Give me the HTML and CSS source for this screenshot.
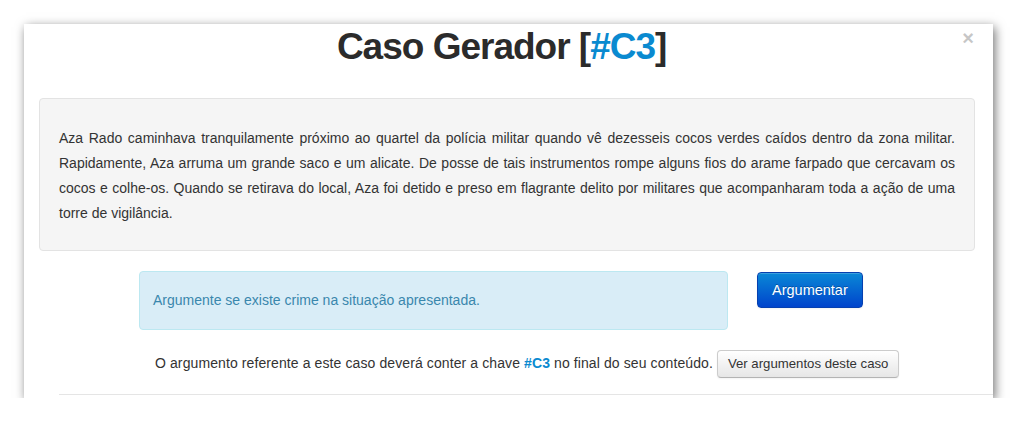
FILE: index.html
```html
<!DOCTYPE html>
<html lang="pt">
<head>
<meta charset="utf-8">
<title>Caso Gerador</title>
<link rel="stylesheet" href="styles.css">
</head>
<body>
<div class="modal">
  <div class="modal-header">
    <span class="close">×</span>
    <h3 class="title">Caso Gerador [<span class="tag">#C3</span>]</h3>
  </div>
  <div class="modal-body">
    <div class="well">
      <p class="case-text">Aza Rado caminhava tranquilamente próximo ao quartel da polícia militar quando vê dezesseis cocos verdes caídos dentro da zona militar. Rapidamente, Aza arruma um grande saco e um alicate. De posse de tais instrumentos rompe alguns fios do arame farpado que cercavam os cocos e colhe-os. Quando se retirava do local, Aza foi detido e preso em flagrante delito por militares que acompanharam toda a ação de uma torre de vigilância.</p>
    </div>
    <div class="action-row">
      <div class="alert">Argumente se existe crime na situação apresentada.</div>
      <button class="btn-primary">Argumentar</button>
    </div>
    <div class="key-row"><span class="key-text">O argumento referente a este caso deverá conter a chave <b class="key">#C3</b> no final do seu conteúdo.</span> <button class="btn">Ver argumentos deste caso</button></div>
  </div>
  <hr class="divider">
</div>
</body>
</html>
```

FILE: styles.css
```css
html, body {
  margin: 0;
  padding: 0;
  background: #fff;
}
body {
  font-family: "Liberation Sans", Arial, sans-serif;
  font-size: 14px;
  color: #333;
}
.modal {
  width: 969px;
  height: 374px;
  margin: 24px 0 0 24px;
  background: #fff;
  box-shadow: 2px 3px 10px rgba(0, 0, 0, 0.55);
  overflow: hidden;
}
.modal-header {
  padding: 2px 19px 0 19px;
}
.close {
  float: right;
  margin-left: 2px;
  margin-top: 0;
  font-size: 20px;
  font-weight: bold;
  line-height: 24px;
  color: #000;
  opacity: 0.22;
}
.title {
  margin: 0;
  text-align: center;
  font-size: 37px;
  letter-spacing: -1px;
  line-height: 42px;
  font-weight: bold;
  color: #2b2b2b;
}
.tag {
  color: #0a8ad0;
}
.modal-body {
  padding: 0 18px 0 15px;
}
.well {
  margin-top: 30px;
  padding: 27px 19px 24px;
  background: #f5f5f5;
  border: 1px solid #e3e3e3;
  border-radius: 4px;
}
.case-text {
  margin: 0;
  line-height: 25px;
  text-align: justify;
}
.action-row {
  display: flex;
  align-items: flex-start;
  gap: 29px;
  margin-top: 20px;
  margin-left: 100px;
}
.alert {
  width: 574px;
  padding: 18px 0 19px 13px;
  line-height: 20px;
  background: #d9edf7;
  border: 1px solid #bce8f1;
  border-radius: 4px;
  color: #3a87ad;
}
.btn-primary {
  margin-top: 1px;
  padding: 8px 14px;
  font-family: inherit;
  font-size: 14.5px;
  line-height: 18px;
  color: #fff;
  text-shadow: 0 -1px 0 rgba(0, 0, 0, 0.25);
  background: linear-gradient(#0a88d6, #0044cc);
  border: 1px solid #0540b0;
  border-radius: 4px;
  box-shadow: inset 0 1px 0 rgba(255, 255, 255, 0.2), 0 1px 2px rgba(0, 0, 0, 0.05);
}
.key-row {
  margin-top: 19px;
  margin-left: 116px;
  line-height: 28px;
}
.key-text {
  letter-spacing: 0.1px;
}
.key {
  color: #0a8ad0;
}
.btn {
  vertical-align: middle;
  padding: 4px 10px;
  font-family: inherit;
  font-size: 13.2px;
  line-height: 18px;
  color: #333;
  background: linear-gradient(#ffffff, #e6e6e6);
  border: 1px solid #cccccc;
  border-bottom-color: #b3b3b3;
  border-radius: 4px;
  box-shadow: inset 0 1px 0 rgba(255, 255, 255, 0.2), 0 1px 2px rgba(0, 0, 0, 0.05);
}
.divider {
  margin: 16px 0 0 35px;
  border: 0;
  border-top: 1px solid #e5e5e5;
}
```
